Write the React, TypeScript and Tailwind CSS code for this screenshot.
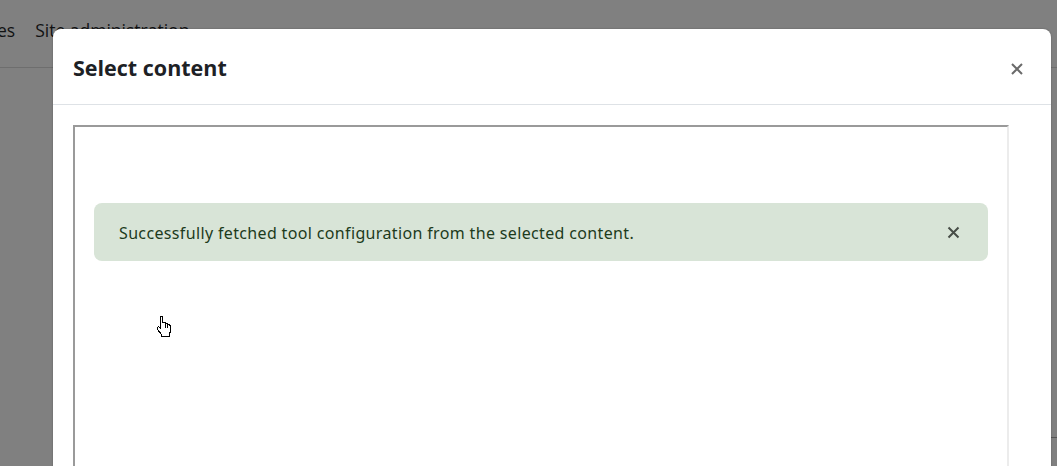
import React from "react";

function Cursor() {
  return (
    <svg width="17" height="23" viewBox="0 0 17 23" className="absolute left-[156px] top-[315px]" shapeRendering="crispEdges">
      <path
        d="M4.5 1.5 L6.5 1.5 L6.5 7.5 L9.5 7.5 L9.5 8.5 L11.5 8.5 L11.5 9.5 L13.5 9.5 L13.5 10.5 L14.5 10.5 L14.5 16.5 L13.5 18.5 L13.5 21.5 L5.5 21.5 L5.5 19.5 L1.5 14.5 L1.5 12.5 L2.5 11.5 L4.5 13.5 Z"
        fill="#fff"
        stroke="#000"
        strokeWidth="1"
      />
      <path d="M9.5 8.5 V12.5 M11.5 9.5 V12.5" stroke="#000" strokeWidth="1" />
    </svg>
  );
}

export default function App() {
  return (
    <div className="relative w-[1057px] h-[466px] overflow-hidden bg-[#808080] font-['Open_Sans','Noto_Sans',sans-serif]">
      {/* background page */}
      <div className="h-[68px] border-b border-[#6e6e6e] flex items-center gap-[20px] pl-0 -ml-[3px] text-[17.5px] text-[#111213] pb-[6px]">
        <span>es</span>
        <span>Site administration</span>
      </div>
      <div className="absolute right-0 top-[437px] w-[10px] border-t border-[#555]" />

      {/* modal */}
      <div className="absolute left-[53px] top-[29px] w-[998px] h-[480px] bg-white rounded-t-[8px] shadow-[0_0_2px_rgba(0,0,0,0.3)]">
        <div className="h-[76px] border-b border-[#dee2e6] flex items-center justify-between pl-[20px] pr-[27px]">
          <h2 className="text-[21.5px] font-bold text-[#1d2125] tracking-[0px] pt-[4px]">Select content</h2>
          <svg width="14" height="14" viewBox="0 0 14 14" className="mt-[5px]">
            <path d="M2 2 L12 12 M12 2 L2 12" stroke="#6a6a6a" strokeWidth="2" />
          </svg>
        </div>
        <div className="pt-[20px] pl-[20px]">
          <div className="w-[936px] h-[360px] border-t-[2px] border-l-[2px] border-r-[2px] border-t-[#9a9a9a] border-l-[#9a9a9a] border-r-[#ececec] pt-[76px] pl-[19px] pr-[19px]">
            <div className="h-[58px] rounded-[8px] bg-[#d8e4d7] flex items-center justify-between pl-[25px] pr-[28px]">
              <span className="text-[16px] text-[#1d3b1c] tracking-[0.35px] font-['Noto_Sans',sans-serif] pt-[1px]">
                Successfully fetched tool configuration from the selected content.
              </span>
              <svg width="13" height="13" viewBox="0 0 13 13">
                <path d="M1.5 1.5 L11.5 11.5 M11.5 1.5 L1.5 11.5" stroke="#474d47" strokeWidth="2" />
              </svg>
            </div>
          </div>
        </div>
      </div>
      <Cursor />
    </div>
  );
}
